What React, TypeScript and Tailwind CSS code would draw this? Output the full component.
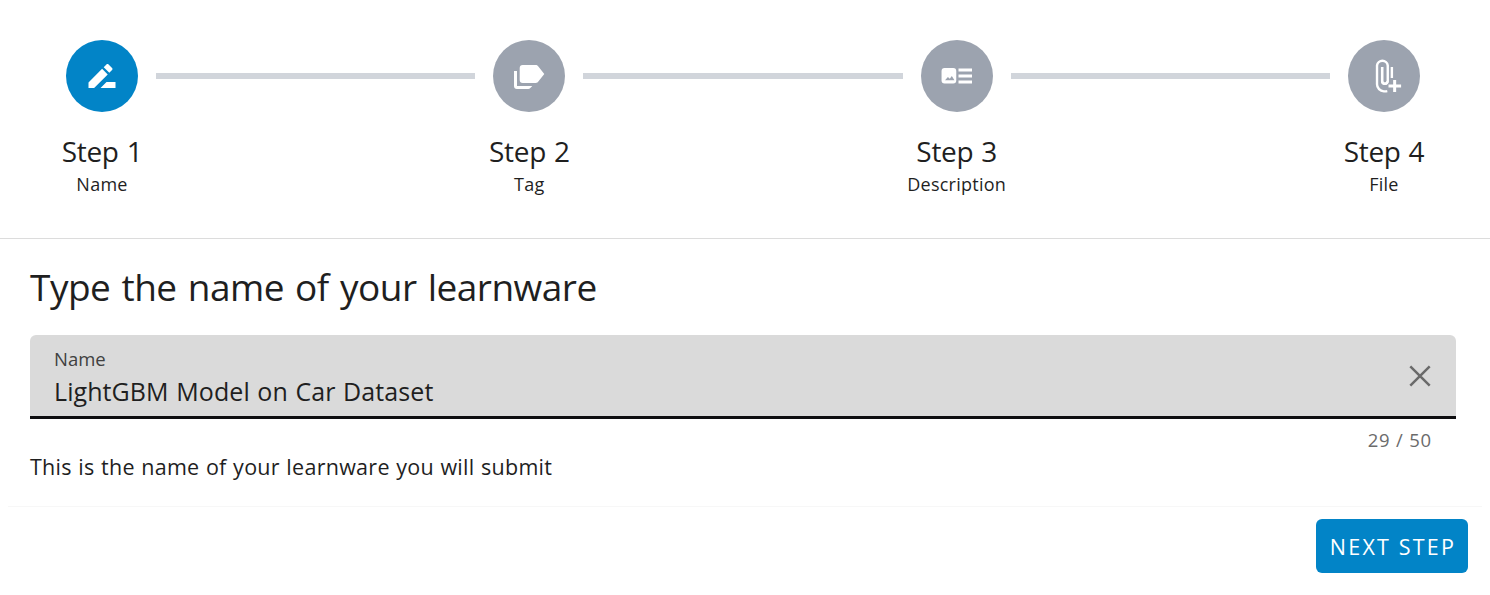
import { Fragment, useState, type ReactNode } from 'react';

function Icon({ children }: { children: ReactNode }) {
  return (
    <svg viewBox="0 0 24 24" className="size-9 fill-white" aria-hidden="true">
      {children}
    </svg>
  );
}

const RenameIcon = () => (
  <Icon>
    <path d="M15,16L11,20H21V16H15M12.06,7.19L3,16.25V20H6.75L15.81,10.94L12.06,7.19M18.71,8.04C19.1,7.65 19.1,7 18.71,6.63L16.37,4.29C16.17,4.09 15.92,4 15.66,4C15.41,4 15.15,4.1 14.96,4.29L13.13,6.12L16.88,9.87L18.71,8.04Z" />
  </Icon>
);

const LabelsIcon = () => (
  <Icon>
    <path d="M7.8 4.7H16.5C17.1 4.7 17.7 5 18.1 5.5L22.2 10.7L18.1 15.9C17.7 16.4 17.1 16.7 16.5 16.7H7.8A2 2 0 0 1 5.8 14.7V6.7A2 2 0 0 1 7.8 4.7Z" />
    <path d="M2 8.7H4V18.7H14.2L12.9 20C12.5 20.5 12 20.7 11.5 20.7H4A2 2 0 0 1 2 18.7Z" />
  </Icon>
);

const ImageTextIcon = () => (
  <Icon>
    <path d="M22,13H13V11H22V13M22,7H13V9H22V7M13,17H22V15H13V17M11.5,8.7V15A2,2 0 0,1 9.5,17H3.7A2,2 0 0,1 1.7,15V8.7A2,2 0 0,1 3.7,6.7H9.5A2,2 0 0,1 11.5,8.7M10.3,14.8L8.55,12L7.2,13.8L5.95,12.6L4,14.8H10.3Z" />
  </Icon>
);

const PaperclipPlusIcon = () => (
  <Icon>
    <path
      d="M14.2 22.1C13.7 22.2 13.1 22.25 12.5 22.25H11.9A4.75 4.75 0 0 1 7.35 17.5V5A3.6 3.6 0 0 1 14.5 5V15.5A1.9 1.9 0 0 1 10.75 15.5V6M17.25 6V13.4"
      className="fill-none stroke-white"
      strokeWidth="1.6"
    />
    <path d="M10 6H11.5V15.5A1 1 0 0 0 13.5 15.5H15A2.5 2.5 0 0 1 10 15.5Z" />
    <path d="M18.1 14.6H20.1V17.6H23.4V19.6H20.1V22.7H18.1V19.6H15V17.6H18.1Z" />
  </Icon>
);

const steps = [
  { title: 'Step 1', label: 'Name', icon: <RenameIcon /> },
  { title: 'Step 2', label: 'Tag', icon: <LabelsIcon /> },
  { title: 'Step 3', label: 'Description', icon: <ImageTextIcon /> },
  { title: 'Step 4', label: 'File', icon: <PaperclipPlusIcon /> },
];

export default function App() {
  const [name, setName] = useState('LightGBM Model on Car Dataset');
  const current = 0;

  return (
    <main className="h-[595px] bg-white font-['Open_Sans','Noto_Sans',sans-serif] text-[#1f1f1f]">
      <header className="flex h-[239px] items-start border-b border-[#dcdcdc] pt-10 pr-[70px] pl-[66px]">
        {steps.map((step, i) => (
          <Fragment key={step.title}>
            {i > 0 && <div className="mx-[18px] mt-[33px] h-1.5 flex-1 bg-[#d1d5db]" />}
            <div className="flex w-[72px] flex-col items-center whitespace-nowrap">
              <div
                className={`flex size-[72px] items-center justify-center rounded-full ${
                  i === current ? 'bg-[#0284c7]' : 'bg-[#9ca3af]'
                }`}
              >
                {step.icon}
              </div>
              <div className="mt-[19px] text-[28px] leading-10 tracking-[-0.3px] [word-spacing:1px]">{step.title}</div>
              <div className="mt-px text-[18px] leading-6 tracking-[0.25px]">{step.label}</div>
            </div>
          </Fragment>
        ))}
      </header>

      <section className="pt-[25px] pr-[34px] pl-[30px]">
        <h1 className="text-[37px] leading-[46px] tracking-[-0.5px] [word-spacing:2px]">
          Type the name of your learnware
        </h1>
        <div className="mt-[25px] flex h-[84px] items-center justify-between rounded-t-md border-b-[3px] border-[#0e0e10] bg-[#dadada] pr-6 pl-6">
          <label className="flex flex-1 flex-col self-start pt-3">
            <span className="text-[18.5px] leading-6 text-[#404040]">Name</span>
            <input
              value={name}
              maxLength={50}
              onChange={(e) => setName(e.target.value)}
              className="mt-[3px] h-[34px] w-full bg-transparent text-[25px] leading-[34px] tracking-[0.08px] outline-none [word-spacing:1px]"
            />
          </label>
          <button type="button" aria-label="Clear" className="pt-px" onClick={() => setName('')}>
            <svg viewBox="0 0 24 24" className="size-6 stroke-[#6a6a6a]" strokeWidth="2.5" aria-hidden="true">
              <path d="M2.3 2.3L21.7 21.7M21.7 2.3L2.3 21.7" />
            </svg>
          </button>
        </div>
        <div className="mt-[10px] pr-6 text-right text-[18.5px] leading-[22px] tracking-[0.8px] text-[#6b6b6b]">
          {name.length} / 50
        </div>
        <p className="text-[21.5px] leading-8 tracking-[0.28px] [word-spacing:0.6px]">
          This is the name of your learnware you will submit
        </p>
      </section>

      <footer className="mx-2 mt-[23px] flex justify-end border-t border-[#f7f7f7] pt-3 pr-[14px]">
        <button
          type="button"
          className="h-[54px] w-[152px] rounded-md bg-[#0284c7] pt-0.5 pl-0.5 text-[21.5px] whitespace-nowrap text-white tracking-[2.2px]"
        >
          NEXT STEP
        </button>
      </footer>
    </main>
  );
}
